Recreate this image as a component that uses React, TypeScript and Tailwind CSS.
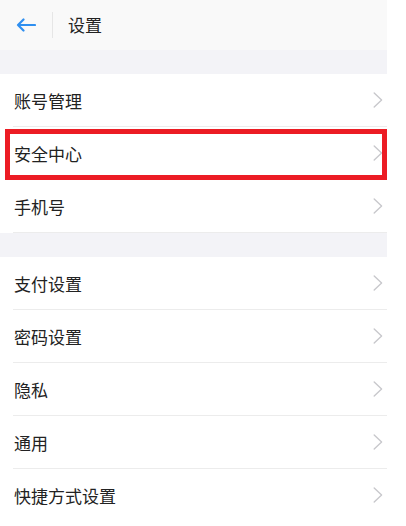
const font = { fontFamily: '"Noto Sans CJK SC", "Noto Sans", sans-serif' };

function Chevron() {
  return (
    <svg width="10" height="16" viewBox="0 0 10 16" fill="none" className="shrink-0">
      <polyline points="1.2,1 8.6,8 1.2,15" stroke="#c8c8cc" strokeWidth="1.4" strokeLinecap="round" strokeLinejoin="round" />
    </svg>
  );
}

function Row({ label, highlight }: { label: string; highlight?: boolean }) {
  return (
    <div className="relative flex h-[52px] items-center justify-between pl-[14px] pr-[4px] bg-white">
      <span className="text-[17px] text-[#222] leading-none">{label}</span>
      <Chevron />
      {highlight && (
        <div className="absolute left-[5px] right-0 top-[2px] -bottom-px border-[5px] border-[#ec1c24]" />
      )}
    </div>
  );
}

function Group({ items }: { items: { label: string; highlight?: boolean }[] }) {
  return (
    <div className="bg-white">
      {items.map((item, i) => (
        <div key={item.label}>
          {i > 0 && <div className="ml-[13px] h-px bg-[#ececec]" />}
          <Row label={item.label} highlight={item.highlight} />
        </div>
      ))}
    </div>
  );
}

export default function App() {
  return (
    <div className="min-h-[526px] w-[406px] bg-white" style={font}>
      <div className="w-[387px]">
        <div className="flex h-[50px] items-center bg-[#f9f9f9]">
          <div className="flex w-[52px] justify-center">
            <svg width="20" height="14" viewBox="0 0 20 14" fill="none" className="ml-[-1px]">
              <path d="M19 7H2M7.5 1.5L2 7l5.5 5.5" stroke="#2f8ff0" strokeWidth="2.2" strokeLinecap="round" strokeLinejoin="round" />
            </svg>
          </div>
          <div className="h-[26px] w-px bg-[#e6e6e6]" />
          <span className="ml-[15px] text-[17px] text-[#222]">设置</span>
        </div>
        <div className="h-[24px] bg-[#f3f3f7]" />
        <Group items={[{ label: "账号管理" }, { label: "安全中心", highlight: true }, { label: "手机号" }]} />
        <div className="h-px ml-[13px] bg-[#ececec]" />
        <div className="h-[24px] bg-[#f3f3f7]" />
        <Group
          items={[
            { label: "支付设置" },
            { label: "密码设置" },
            { label: "隐私" },
            { label: "通用" },
            { label: "快捷方式设置" },
          ]}
        />
      </div>
    </div>
  );
}
